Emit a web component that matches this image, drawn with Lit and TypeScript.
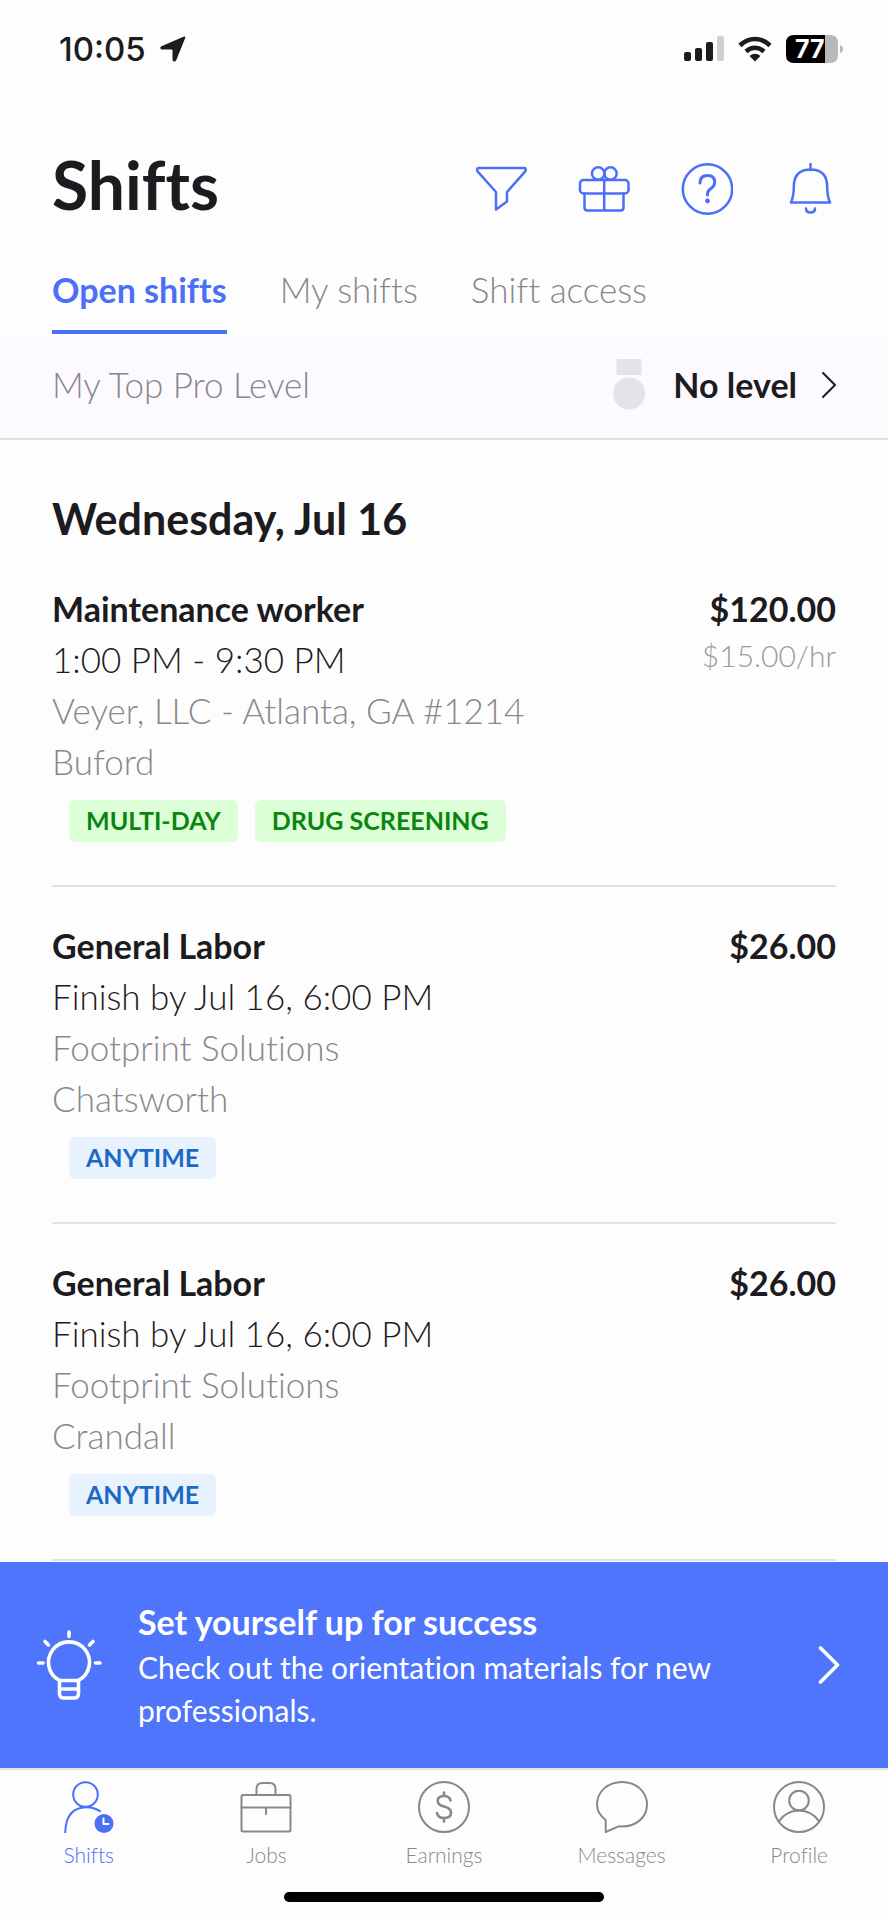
import { LitElement, html, css, svg, nothing } from 'lit';
import { customElement, state } from 'lit/decorators.js';
import { classMap } from 'lit/directives/class-map.js';

interface Tag {
  label: string;
  tone: 'green' | 'blue';
}

interface Shift {
  title: string;
  time: string;
  company: string;
  city: string;
  pay: string;
  rate?: string;
  tags: Tag[];
}

const SHIFTS: Shift[] = [
  {
    title: 'Maintenance worker',
    time: '1:00 PM - 9:30 PM',
    company: 'Veyer, LLC - Atlanta, GA #1214',
    city: 'Buford',
    pay: '$120.00',
    rate: '$15.00/hr',
    tags: [
      { label: 'MULTI-DAY', tone: 'green' },
      { label: 'DRUG SCREENING', tone: 'green' },
    ],
  },
  {
    title: 'General Labor',
    time: 'Finish by Jul 16, 6:00 PM',
    company: 'Footprint Solutions',
    city: 'Chatsworth',
    pay: '$26.00',
    tags: [{ label: 'ANYTIME', tone: 'blue' }],
  },
  {
    title: 'General Labor',
    time: 'Finish by Jul 16, 6:00 PM',
    company: 'Footprint Solutions',
    city: 'Crandall',
    pay: '$26.00',
    tags: [{ label: 'ANYTIME', tone: 'blue' }],
  },
];

const ACTIONS = [
  {
    label: 'Filter',
    icon: svg`<path d="M4 5h45q1.800 0 1.800 1.600 0 1-.8 2L32 29v9.500L21 46.500V29L2.800 8.600q-.8-1-.8-2Q2 5 4 5z"/>`,
  },
  {
    label: 'Rewards',
    icon: svg`<rect x="2" y="17" width="48.500" height="13.500" rx="3.500"/><path d="M6.500 30.500v14q0 3 3 3h33q3 0 3-3v-14M26.200 17v30.500"/><circle cx="20.200" cy="10.500" r="6.200"/><circle cx="32.500" cy="10.500" r="6.200"/>`,
  },
  {
    label: 'Help',
    icon: svg`<circle cx="26.500" cy="26" r="24.700"/><path d="M19 20q0-7.500 7.400-7.500 7.300 0 7.300 6.700 0 3.800-3.800 6.200-3.400 2.100-3.400 5.600v1" stroke-width="3"/><circle class="solid" cx="26.500" cy="38" r="2.400"/>`,
  },
  {
    label: 'Notifications',
    icon: svg`<path d="M26.500 1v6M7 39.500Q9.800 33 9.800 24 9.800 6.500 26.500 6.500T43.200 24q0 9 2.800 15.500zM22 45.500q0 4 4.500 4t4.500-4"/>`,
  },
];

const DESTINATIONS = [
  {
    label: 'Shifts',
    icon: svg`<circle cx="22.500" cy="13.500" r="12.300"/><path d="M2.200 51.500Q3 26.200 23.500 26.200q7.500 0 13.500 4"/><circle class="solid" cx="41" cy="42.500" r="9.500"/><path class="hands" d="M40.500 37.500v5.500h5"/>`,
  },
  {
    label: 'Jobs',
    icon: svg`<rect x="1.500" y="14" width="49" height="36.500" rx="1.500"/><path d="M1.500 26.500h49M26 26.500v6.500M16.500 14V8q0-6 6-6h7q6 0 6 6v6"/>`,
  },
  {
    label: 'Earnings',
    icon: svg`<circle cx="26" cy="26" r="25"/><path d="M32.500 19.500q-1-4.500-6.500-4.500-6.300 0-6.300 5 0 4 6.300 5.500 7 1.600 7 6.300 0 5.200-7 5.200-6.200 0-7-5M26 11.500V15m0 22v3.500" stroke-width="2.600"/>`,
  },
  {
    label: 'Messages',
    icon: svg`<path d="M9.700 51V39Q1 32.500 1 23.500C1 10.500 12 1 26 1s25 9.500 25 22.500S40 45.500 26 45.500q-2.500-.5-4.500.3z"/>`,
  },
  {
    label: 'Profile',
    icon: svg`<circle cx="26" cy="26" r="25"/><circle cx="26" cy="19.500" r="9.800"/><path d="M5.800 40.500Q13 29.500 26 29.500t20.200 11"/>`,
  },
];

@customElement('app-root')
export class AppRoot extends LitElement {
  @state() private tab = 0;

  static styles = css`
    :host {
      --ink: #1c1b20;
      --muted: #88878c;
      --line: #e2e1e6;
      --blue: #4b70f8;
      --gutter: 52px;
      display: flex;
      flex-direction: column;
      min-height: 100vh;
      background: #fefdfe;
      color: var(--ink);
      font: 300 35px/51px Lato, 'Noto Sans', sans-serif;
      font-variant-ligatures: none;
    }
    * {
      box-sizing: border-box;
    }
    h1,
    h2,
    h3,
    p,
    ul {
      margin: 0;
      padding: 0;
    }
    ul {
      list-style: none;
    }
    button {
      margin: 0;
      padding: 0;
      border: 0;
      background: none;
      color: inherit;
      font: inherit;
      font-variant-ligatures: none;
      text-align: left;
      cursor: pointer;
    }
    a {
      color: inherit;
      text-decoration: none;
    }
    svg {
      display: block;
      flex: none;
      fill: none;
      stroke: currentColor;
      stroke-width: 2;
      stroke-linecap: round;
      stroke-linejoin: round;
    }
    .solid {
      fill: currentColor;
      stroke: none;
    }

    .status {
      display: flex;
      align-items: center;
      justify-content: space-between;
      height: 98px;
      padding: 0 44px 0 59px;
      font: 500 33px/40px Inter, sans-serif;
    }
    .clock,
    .signals {
      display: flex;
      align-items: center;
      gap: 14px;
    }
    .battery-text {
      fill: #fff;
      stroke: none;
      font: 700 25px Inter, sans-serif;
    }
    .battery-full {
      fill: #000;
    }
    .battery-rest {
      fill: #b9b9bb;
    }
    .waves {
      stroke-width: 4.6;
      stroke-linecap: butt;
    }

    .top {
      padding: 47px var(--gutter) 2px;
    }
    .heading {
      display: flex;
      align-items: flex-start;
      justify-content: space-between;
    }
    h1 {
      font-size: 66px;
      line-height: 80px;
      font-weight: 700;
    }
    .actions {
      display: flex;
      gap: 51px;
      padding-top: 18px;
      color: var(--blue);
    }
    .actions svg {
      stroke-width: 2.5;
    }
    .tabs {
      display: flex;
      gap: 53px;
      padding-top: 39px;
    }
    .tab {
      padding-bottom: 15px;
      border-bottom: 4px solid transparent;
      color: var(--muted);
    }
    .tab.active {
      border-color: var(--blue);
      color: var(--blue);
      font-size: 34px;
      font-weight: 700;
    }

    .level {
      display: flex;
      align-items: center;
      justify-content: space-between;
      width: 100%;
      padding: 23px var(--gutter) 28px;
      border-bottom: 2px solid var(--line);
      background: #fcfafe;
      color: var(--muted);
    }
    .level-value {
      display: flex;
      align-items: center;
      color: var(--ink);
      font-size: 34px;
      font-weight: 700;
    }
    .medal {
      margin-right: 27px;
      color: #e4e3e7;
    }
    .level-value .chevron {
      margin-left: 25px;
    }

    main {
      flex: 1;
      padding: 53px var(--gutter) 1px;
    }
    h2 {
      padding-bottom: 5px;
      font-size: 43px;
      line-height: 52px;
      font-weight: 700;
    }
    .shift {
      padding: 33px 0 43px;
      border-bottom: 2px solid var(--line);
    }
    .shift-body {
      display: flex;
      justify-content: space-between;
      gap: 16px;
    }
    h3 {
      font-size: 34px;
      font-weight: 700;
    }
    .muted {
      color: var(--muted);
    }
    .pay {
      text-align: right;
      font-size: 34px;
      font-weight: 700;
    }
    .rate {
      color: #9b9aa0;
      font-size: 30px;
      line-height: 43px;
      font-weight: 300;
    }
    .tags {
      display: flex;
      flex-wrap: wrap;
      gap: 17px;
      padding: 13px 0 0 17px;
    }
    .tag {
      padding: 0 17px 2px;
      border-radius: 6px;
      font-size: 25px;
      line-height: 40px;
      font-weight: 700;
    }
    .green {
      background: #dcffd8;
      color: #0a850f;
    }
    .blue {
      background: #e8f2ff;
      color: #1b69c4;
    }

    .banner {
      display: flex;
      align-items: center;
      gap: 36px;
      padding: 36px 48px 36px 36px;
      background: #4e75fb;
      color: #fff;
    }
    .banner svg {
      stroke-width: 3.6;
    }
    .banner-text {
      flex: 1;
      font-size: 30px;
      line-height: 43px;
      font-weight: 400;
    }
    .banner-text p {
      max-width: 600px;
    }
    .banner-title {
      font-size: 34px;
      line-height: 48px;
      font-weight: 700;
    }

    .nav {
      border-top: 2px solid var(--line);
      padding: 11px 0 24px;
    }
    .nav ul {
      display: grid;
      grid-template-columns: repeat(5, 1fr);
    }
    .nav a {
      display: flex;
      flex-direction: column;
      align-items: center;
      gap: 9px;
      color: var(--muted);
      font-size: 21px;
      line-height: 26px;
    }
    .nav a.current {
      color: var(--blue);
    }
    .hands {
      stroke: #fff;
    }
    .home {
      width: 36%;
      height: 10px;
      margin: 0 auto 18px;
      border-radius: 5px;
      background: #000;
    }
  `;

  private renderStatus() {
    return html`
      <div class="status">
        <div class="clock">
          <span>10:05</span>
          <svg width="26" height="26" viewBox="0 0 26 26">
            <path class="solid" d="M23.500.7q2.500-1 1.600 1.600L16.300 24q-1 2-2.600 1.500-1.200-.3-1.200-2v-9.200q0-.9-.9-.9H2.500q-2 0-2.200-1.200-.3-1.300 1.700-2.200z" />
          </svg>
        </div>
        <div class="signals">
          <svg width="40" height="26" viewBox="0 0 40 26">
            <rect class="solid" x="0" y="16" width="7" height="9" rx="2" />
            <rect class="solid" x="11" y="12" width="7" height="13" rx="2" />
            <rect class="solid" x="22" y="6" width="7" height="19" rx="2" />
            <rect class="solid" x="33" y="0" width="7" height="25" rx="2" opacity=".2" />
          </svg>
          <svg width="34" height="26" viewBox="0 0 34 26">
            <path class="waves" d="M2 9.500Q8.500 3 17 3t15 6.500M8 15.500q4-3.700 9-3.700t9 3.700" />
            <path class="solid" d="M11.500 20q2.500-2.200 5.500-2.200t5.500 2.200L17 25.500z" />
          </svg>
          <svg width="58" height="28" viewBox="0 0 58 28" stroke="none">
            <g class="solid">
              <path class="battery-rest" d="M39 0h5q8 0 8 8v12q0 8-8 8h-5z" />
              <path class="battery-full" d="M8 0h31v28H8q-8 0-8-8V8q0-8 8-8z" />
              <path class="battery-rest" d="M54 10q3 1 3 4t-3 4z" />
              <text class="battery-text" x="9" y="23">77</text>
            </g>
          </svg>
        </div>
      </div>
    `;
  }

  private renderShift(s: Shift) {
    return html`
      <article class="shift">
        <div class="shift-body">
          <div>
            <h3>${s.title}</h3>
            <p>${s.time}</p>
            <p class="muted">${s.company}</p>
            <p class="muted">${s.city}</p>
          </div>
          <div class="pay">
            <p>${s.pay}</p>
            ${s.rate ? html`<p class="rate">${s.rate}</p>` : nothing}
          </div>
        </div>
        <div class="tags">
          ${s.tags.map((t) => html`<span class="tag ${t.tone}">${t.label}</span>`)}
        </div>
      </article>
    `;
  }

  render() {
    return html`
      ${this.renderStatus()}
      <header class="top">
        <div class="heading">
          <h1>Shifts</h1>
          <div class="actions">
            ${ACTIONS.map(
              (a) => html`<button aria-label=${a.label}>
                <svg width="52" height="52" viewBox="0 0 52 52">${a.icon}</svg>
              </button>`,
            )}
          </div>
        </div>
        <div class="tabs" role="tablist">
          ${['Open shifts', 'My shifts', 'Shift access'].map(
            (label, i) => html`<button
              role="tab"
              aria-selected=${this.tab === i}
              class=${classMap({ tab: true, active: this.tab === i })}
              @click=${() => (this.tab = i)}
            >${label}</button>`,
          )}
        </div>
      </header>
      <button class="level">
        <span>My Top Pro Level</span>
        <span class="level-value">
          <svg class="medal" width="34" height="51" viewBox="0 0 34 51">
            <rect class="solid" x="4.500" y="0" width="25" height="16" />
            <circle class="solid" cx="17" cy="34.500" r="16" />
          </svg>
          No level
          <svg class="chevron" width="14" height="28" viewBox="0 0 14 28">
            <path d="M1 2l12 12L1 26" />
          </svg>
        </span>
      </button>
      <main>
        <h2>Wednesday, Jul 16</h2>
        ${SHIFTS.map((s) => this.renderShift(s))}
      </main>
      <a class="banner" href="#orientation">
        <svg width="66" height="70" viewBox="0 0 66 70">
          <path d="M23.500 50.500A20.500 20.500 0 1 1 42.500 50.500M23.500 50v13.500q0 4.500 4.500 4.500h10q4.500 0 4.500-4.500V50M23.500 50.500h19M23.500 59h19M33 2v4.500M9 11.500l3.500 3.500M57 11.500L53.500 15M2.500 33H7M59.500 33H64" />
        </svg>
        <div class="banner-text">
          <div class="banner-title">Set yourself up for success</div>
          <p>Check out the orientation materials for new professionals.</p>
        </div>
        <svg width="22" height="38" viewBox="0 0 22 38">
          <path d="M2.500 2l17 17-17 17" />
        </svg>
      </a>
      <nav class="nav">
        <ul>
          ${DESTINATIONS.map(
            (d, i) => html`<li>
              <a href="#${d.label.toLowerCase()}" class=${classMap({ current: i === 0 })}>
                <svg width="52" height="52" viewBox="0 0 52 52">${d.icon}</svg>
                <span>${d.label}</span>
              </a>
            </li>`,
          )}
        </ul>
      </nav>
      <div class="home"></div>
    `;
  }
}
